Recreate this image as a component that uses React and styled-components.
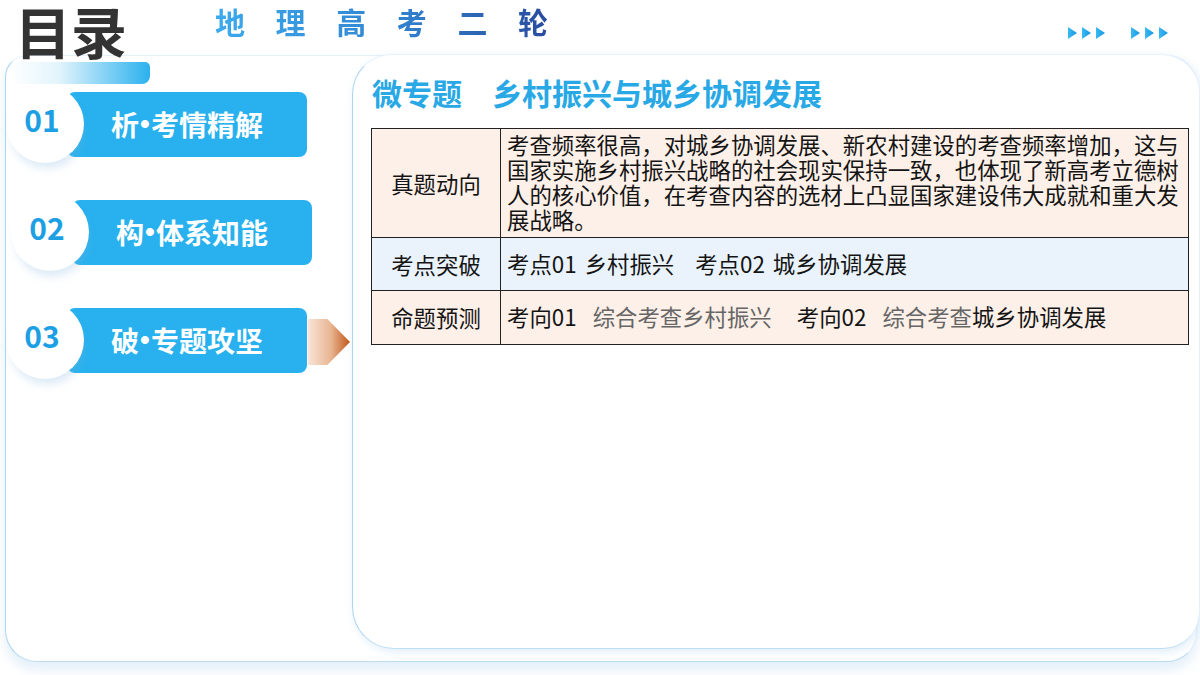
import React from 'react';
import styled, { createGlobalStyle } from 'styled-components';

const GlobalStyle = createGlobalStyle`
  html, body {
    margin: 0;
    padding: 0;
    background: #fff;
  }
  body {
    font-family: "Noto Sans CJK SC", "Noto Sans", sans-serif;
  }
`;

const Page = styled.div`
  width: 1200px;
  height: 675px;
  box-sizing: border-box;
  padding: 0 3px 0 5px;
  display: flex;
  flex-direction: column;
  overflow: hidden;
  background: #fff;
`;

const Header = styled.header`
  height: 55px;
  flex-shrink: 0;
  display: flex;
  align-items: flex-start;
`;

const Title = styled.h1`
  position: relative;
  z-index: 2;
  margin: 2px 0 0 10px;
  font-size: 56px;
  line-height: 1;
  font-weight: 700;
  color: #333;
`;

const Subtitle = styled.div`
  margin: 5px 0 0 88px;
  font-size: 30px;
  line-height: 1.1;
  font-weight: 700;
  letter-spacing: 30.6px;
  background: linear-gradient(90deg, #3caaee 0%, #3183cf 50%, #2a4b9f 92%);
  -webkit-background-clip: text;
  background-clip: text;
  color: transparent;
`;

const Arrows = styled.svg`
  margin: 27px 29px 0 auto;
  display: block;
`;

const Card = styled.div`
  flex: 1;
  margin-bottom: 13px;
  box-sizing: border-box;
  display: flex;
  background: #fff;
  border: 1px solid #e4f1fb;
  border-left-color: #a9d6f3;
  border-bottom-color: #bcdcf3;
  border-radius: 22px 30px 30px 32px;
  box-shadow: 0 8px 12px rgba(175, 210, 238, 0.35);
`;

const Sidebar = styled.aside`
  width: 346px;
  flex-shrink: 0;
  display: flex;
  flex-direction: column;
`;

const Tab = styled.div`
  width: 140px;
  height: 22px;
  margin: 6px 0 0 4px;
  border-radius: 0 5px 8px 0;
  background: linear-gradient(90deg, rgba(255, 255, 255, 0) 0%, #e2f4fc 35%, #2bb1ee 100%);
`;

const NavList = styled.nav`
  margin-top: 1px;
  display: flex;
  flex-direction: column;
  gap: 30px;
`;

const NavItem = styled.div`
  display: flex;
  align-items: center;
  margin-left: ${(p) => p.$shift || 0}px;
`;

const Circle = styled.div`
  position: relative;
  z-index: 1;
  width: 78px;
  height: 78px;
  flex-shrink: 0;
  box-sizing: border-box;
  padding: 0 6px 11px 0;
  border-radius: 50%;
  background: #fff;
  box-shadow: 2px 8px 10px -3px rgba(130, 180, 222, 0.3);
  display: flex;
  align-items: center;
  justify-content: center;
  font-size: 30px;
  font-weight: 700;
  color: #1d9fe4;
`;

const Pill = styled.div`
  width: 240px;
  height: 65px;
  margin-left: -17px;
  border-radius: 8px;
  background: #28b1ee;
  display: flex;
  align-items: center;
  justify-content: center;
  font-size: 28px;
  font-weight: 700;
  color: #fff;
`;

const Dot = styled.span`
  font-family: "Liberation Sans", Arial, sans-serif;
  font-weight: 700;
  margin: 0 1px;
`;

const Pointer = styled.div`
  width: 42px;
  height: 46px;
  margin: 4px 0 0 1px;
  clip-path: polygon(0 0, 46% 0, 100% 50%, 46% 100%, 0 100%);
  background: linear-gradient(90deg, #f8e4d7 0%, #e8b592 55%, #c05518 100%);
`;

const Panel = styled.section`
  flex: 1;
  margin: -2px -2px 12px 0;
  box-sizing: border-box;
  padding: 19px 10px 0 18px;
  background: #fff;
  border-left: 1px solid #a9d5f2;
  border-top: 1px solid #e8f3fb;
  border-bottom: 1px solid #c0def4;
  border-radius: 40px 38px 36px 42px;
  box-shadow: 2px 3px 8px rgba(165, 205, 238, 0.35);
`;

const Heading = styled.h2`
  margin: 0 0 0 1px;
  font-size: 30px;
  line-height: 36px;
  font-weight: 700;
  color: #29a8e6;
`;

const Table = styled.table`
  width: 818px;
  margin-top: 18px;
  border-collapse: collapse;
  font-size: 22.4px;
  color: #141414;
`;

const Row = styled.tr`
  background: ${(p) => (p.$tone === 'blue' ? '#eaf3fb' : '#fdf0e8')};
`;

const Label = styled.td`
  width: 128px;
  height: ${(p) => p.$h}px;
  padding: 0;
  border: 1.5px solid #222;
  text-align: center;
  vertical-align: middle;
  line-height: 25px;
`;

const Cell = styled.td`
  padding: 2px 6px 4px 6px;
  border: 1.5px solid #222;
  line-height: 25px;
  vertical-align: middle;
  white-space: nowrap;
`;

const Seg = styled.span`
  margin-left: ${(p) => p.$gap || 0}px;
  color: ${(p) => (p.$muted ? '#666' : 'inherit')};
`;

const navItems = [
  { num: '01', lead: '析', rest: '考情精解', shift: 0 },
  { num: '02', lead: '构', rest: '体系知能', shift: 5 },
  { num: '03', lead: '破', rest: '专题攻坚', shift: 0, active: true },
];

const arrowXs = [0, 14, 28, 63, 77, 91];

const App = () => {
  return (
    <>
      <GlobalStyle />
      <Page>
        <Header>
          <Title>目录</Title>
          <Subtitle>地理高考二轮</Subtitle>
          <Arrows width="100" height="12" viewBox="0 0 100 12">
            <defs>
              <linearGradient id="arrowFill" x1="0" y1="0" x2="1" y2="0">
                <stop offset="0" stopColor="#3cb9f2" />
                <stop offset="1" stopColor="#1597e2" />
              </linearGradient>
            </defs>
            {arrowXs.map((x) => (
              <path key={x} d={`M${x} 0 L${x + 9} 6 L${x} 12 Z`} fill="url(#arrowFill)" />
            ))}
          </Arrows>
        </Header>

        <Card>
          <Sidebar>
            <Tab />
            <NavList>
              {navItems.map((item) => (
                <NavItem key={item.num} $shift={item.shift}>
                  <Circle>{item.num}</Circle>
                  <Pill>
                    {item.lead}
                    <Dot>•</Dot>
                    {item.rest}
                  </Pill>
                  {item.active && <Pointer />}
                </NavItem>
              ))}
            </NavList>
          </Sidebar>

          <Panel>
            <Heading>微专题　乡村振兴与城乡协调发展</Heading>
            <Table>
              <tbody>
                <Row>
                  <Label $h={108}>真题动向</Label>
                  <Cell>
                    考查频率很高，对城乡协调发展、新农村建设的考查频率增加，这与
                    <br />
                    国家实施乡村振兴战略的社会现实保持一致，也体现了新高考立德树
                    <br />
                    人的核心价值，在考查内容的选材上凸显国家建设伟大成就和重大发
                    <br />
                    展战略。
                  </Cell>
                </Row>
                <Row $tone="blue">
                  <Label $h={52}>考点突破</Label>
                  <Cell>
                    <Seg>考点01</Seg>
                    <Seg $gap={8}>乡村振兴</Seg>
                    <Seg $gap={21}>考点02</Seg>
                    <Seg $gap={8}>城乡协调发展</Seg>
                  </Cell>
                </Row>
                <Row>
                  <Label $h={53}>命题预测</Label>
                  <Cell>
                    <Seg>考向01</Seg>
                    <Seg $gap={16} $muted>综合考查乡村振兴</Seg>
                    <Seg $gap={25}>考向02</Seg>
                    <Seg $gap={16} $muted>综合考查</Seg>
                    <Seg>城乡协调发展</Seg>
                  </Cell>
                </Row>
              </tbody>
            </Table>
          </Panel>
        </Card>
      </Page>
    </>
  );
};

export default App;
